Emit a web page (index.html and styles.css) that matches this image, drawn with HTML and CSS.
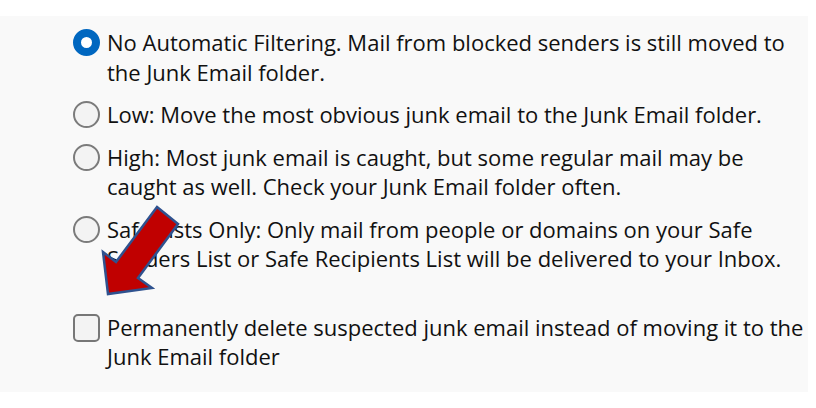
FILE: index.html
```html
<!DOCTYPE html>
<html lang="en">
<head>
  <meta charset="UTF-8" />
  <title>Junk Email Options</title>
  <link rel="stylesheet" href="styles.css">
</head>
<body>
  <div class="panel">
    <div class="option">
      <span class="radio checked"></span>
      <div class="label">No Automatic Filtering. Mail from blocked senders is still moved to<br>the Junk Email folder.</div>
    </div>
    <div class="option">
      <span class="radio"></span>
      <div class="label">Low: Move the most obvious junk email to the Junk Email folder.</div>
    </div>
    <div class="option">
      <span class="radio"></span>
      <div class="label">High: Most junk email is caught, but some regular mail may be<br>caught as well. Check your Junk Email folder often.</div>
    </div>
    <div class="option">
      <span class="radio"></span>
      <div class="label">Safe Lists Only: Only mail from people or domains on your Safe<br>Senders List or Safe Recipients List will be delivered to your Inbox.</div>
    </div>
    <div class="option check-row">
      <span class="checkbox"></span>
      <div class="label">Permanently delete suspected junk email instead of moving it to the<br>Junk Email folder</div>
    </div>

    <!-- callout arrow pasted over the dialog -->
    <svg class="arrow" width="816" height="408" viewBox="0 0 816 408">
      <polygon points="157,207 178,224 138,278 152,288 108,294 103,252 116,262"
               fill="#c00000" stroke="#2f528f" stroke-width="2.5" stroke-linejoin="miter"/>
    </svg>
  </div>
</body>
</html>
```

FILE: styles.css
```css
body {
  margin: 0;
  background: #ffffff;
  font-family: "Open Sans", "Noto Sans", sans-serif;
}
.panel {
  position: relative;
  width: 808px;
  height: 376px;
  margin-top: 16px;
  background: #f9f9f9;
  box-sizing: border-box;
  padding: 12px 0 0 73px;
}
.option {
  display: flex;
  align-items: flex-start;
  gap: 7px;
  margin-bottom: 13px;
}
.check-row {
  margin-top: 39px;
}
.label {
  font-size: 22px;
  line-height: 29.5px;
  color: #111111;
  white-space: nowrap;
}
.radio {
  flex: none;
  width: 27px;
  height: 27px;
  margin-top: 1px;
  box-sizing: border-box;
  border-radius: 50%;
  border: 2px solid #7b7b7b;
  background: #f3f3f3;
}
.radio.checked {
  border: 8px solid #0067c0;
  background: #ffffff;
}
.checkbox {
  flex: none;
  width: 27px;
  height: 28px;
  margin-top: 1px;
  box-sizing: border-box;
  border-radius: 5px;
  border: 2px solid #777777;
  background: #f3f3f3;
}
.arrow {
  position: absolute;
  left: 0;
  top: -16px;
  pointer-events: none;
}
```
